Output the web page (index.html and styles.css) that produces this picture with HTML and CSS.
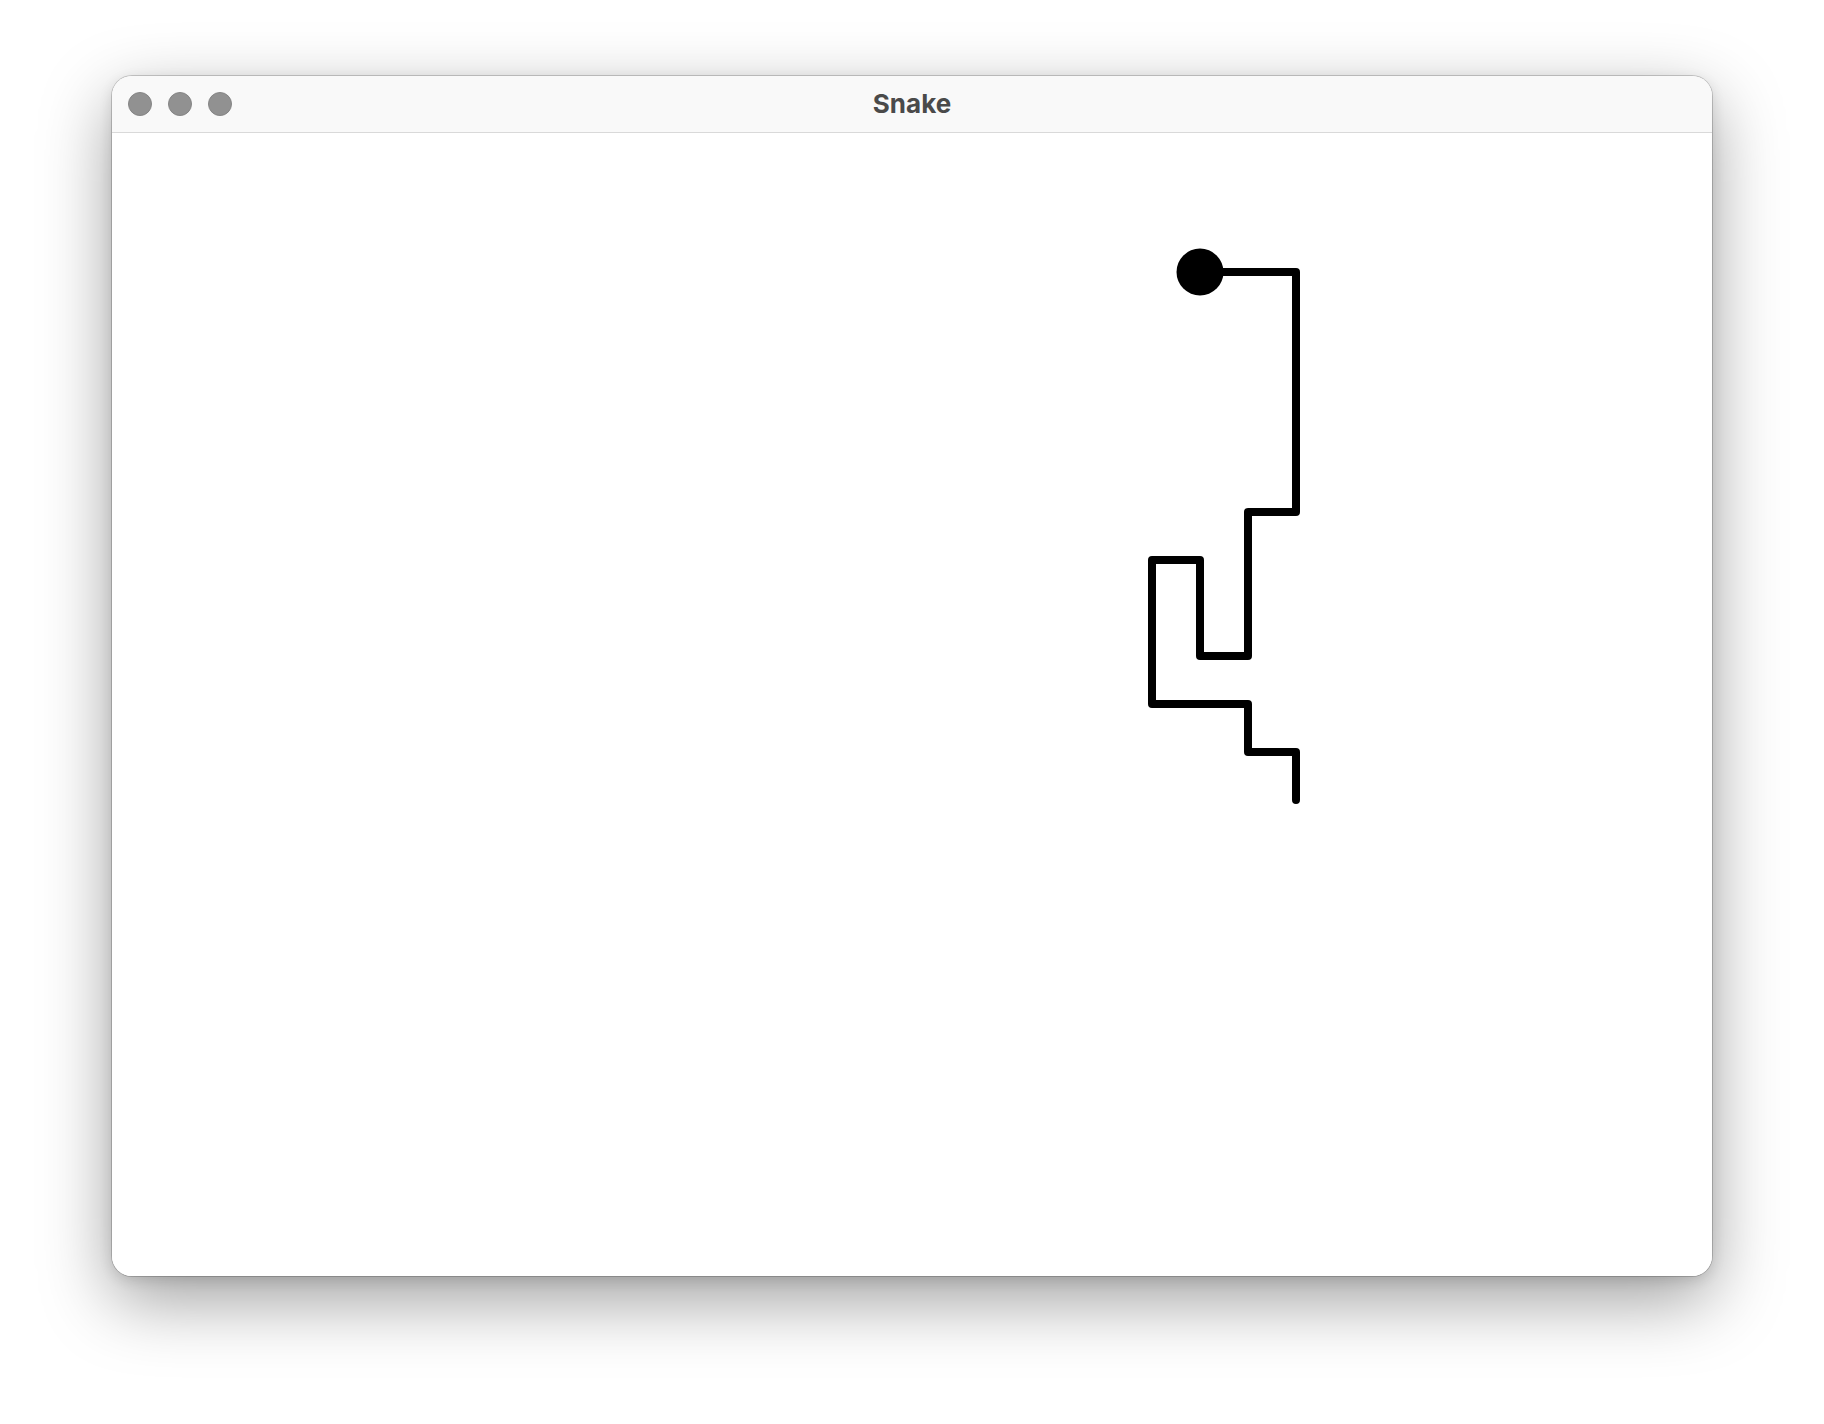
FILE: index.html
```html
<!DOCTYPE html>
<html>
<head>
<meta charset="utf-8">
<title>Snake</title>
<link rel="stylesheet" href="styles.css">
</head>
<body>
<div class="window">
  <div class="titlebar">
    <div class="lights">
      <span class="light"></span>
      <span class="light"></span>
      <span class="light"></span>
    </div>
    <div class="title">Snake</div>
  </div>
  <div class="content">
    <svg class="board" width="1600" height="1143" viewBox="0 0 1600 1143">
      <path class="snake" d="M1088 139 H1184 V379 H1136 V523 H1088 V427 H1040 V571 H1136 V619 H1184 V667"/>
      <circle class="head" cx="1088" cy="139" r="23.5"/>
    </svg>
  </div>
</div>
</body>
</html>
```
FILE: styles.css
```css
html, body {
  margin: 0;
  padding: 0;
  background: #ffffff;
  width: 1824px;
  height: 1424px;
  overflow: hidden;
}
body {
  display: flex;
  justify-content: center;
  align-items: flex-start;
  padding-top: 76px;
  box-sizing: border-box;
}
.window {
  width: 1600px;
  height: 1200px;
  border-radius: 20px;
  background: #ffffff;
  box-shadow: 0 0 0 1px rgba(0,0,0,0.18), 0 24px 70px rgba(0,0,0,0.38), 0 4px 14px rgba(0,0,0,0.12);
  overflow: hidden;
  display: flex;
  flex-direction: column;
}
.titlebar {
  height: 56px;
  flex: none;
  background: #f9f9f9;
  border-bottom: 1px solid #d9d9d9;
  position: relative;
  display: flex;
  align-items: center;
}
.lights {
  display: flex;
  gap: 16px;
  padding-left: 16px;
}
.light {
  width: 22px;
  height: 22px;
  border-radius: 50%;
  background: #919191;
  border: 1px solid #858585;
}
.title {
  position: absolute;
  left: 0;
  right: 0;
  top: 0;
  bottom: 2px;
  display: flex;
  align-items: center;
  justify-content: center;
  font-family: Inter, "Open Sans", "Liberation Sans", sans-serif;
  font-weight: 700;
  font-size: 26px;
  color: #4a4a4a;
}
.content {
  flex: 1;
  background: #ffffff;
}
.board {
  display: block;
}
.snake {
  fill: none;
  stroke: #000;
  stroke-width: 8;
  stroke-linecap: round;
  stroke-linejoin: round;
}
.head {
  fill: #000;
}
```
